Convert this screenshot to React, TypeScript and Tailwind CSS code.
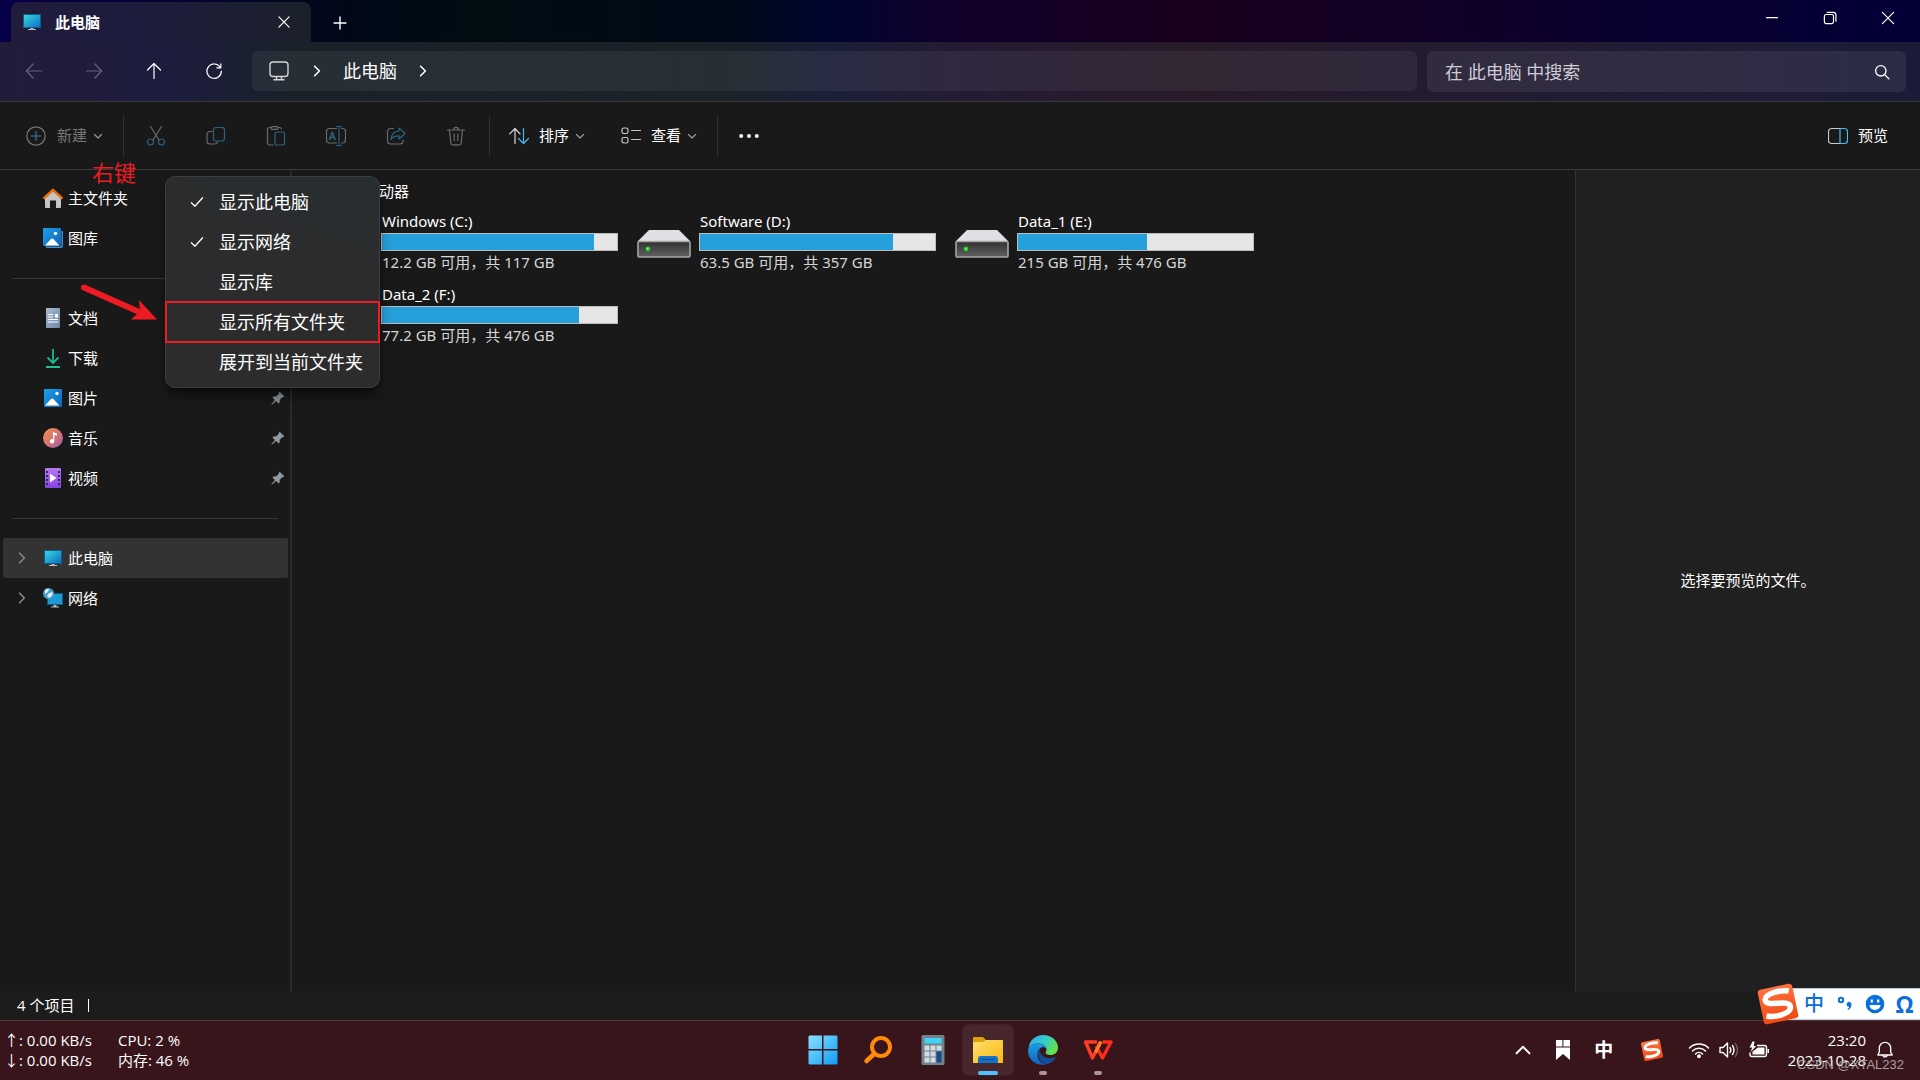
import type { ReactNode } from "react";

const NAV_BG =
  "bg-[linear-gradient(90deg,#231b3a_0%,#1c1c3d_9%,#1a2129_15%,#1b2228_38%,#1b1f38_43%,#241b33_50%,#281a29_62%,#231b30_74%,#1f1c36_90%,#1c1c38_100%)]";
const STRIP_BG =
  "bg-[linear-gradient(90deg,#060048_0%,#05003a_6%,#000818_18%,#000d12_25%,#000a18_38%,#000530_43%,#12002b_50%,#18001c_62%,#120026_74%,#080030_86%,#030036_100%)]";

type StrokeProps = { children: ReactNode; size?: number; className?: string };

function Stroke({ children, size = 20, className = "" }: StrokeProps) {
  return (
    <svg
      width={size}
      height={size}
      viewBox="0 0 20 20"
      fill="none"
      stroke="currentColor"
      strokeWidth="1.2"
      strokeLinecap="round"
      strokeLinejoin="round"
      className={`shrink-0 ${className}`}
      aria-hidden="true"
    >
      {children}
    </svg>
  );
}

function ChevronDown() {
  return (
    <Stroke size={10} className="text-[#9a9a9a]">
      <path d="M3 7l7 7 7-7" strokeWidth="2.4" />
    </Stroke>
  );
}

function ChevronRight({ className = "" }: { className?: string }) {
  return (
    <Stroke size={12} className={className}>
      <path d="M6 2l8 8-8 8" strokeWidth="2.6" />
    </Stroke>
  );
}

function MonitorIcon() {
  return (
    <svg width="20" height="20" viewBox="0 0 20 20" className="shrink-0" aria-hidden="true">
      <defs>
        <linearGradient id="screen" x1="0" y1="0" x2="1" y2="1">
          <stop offset="0" stopColor="#35d6e0" />
          <stop offset="1" stopColor="#0f6fc4" />
        </linearGradient>
      </defs>
      <rect x="1" y="2" width="18" height="14" rx="0.6" fill="#0d5f86" />
      <rect x="2" y="3" width="16" height="12" fill="url(#screen)" />
      <path d="M8.500 16h3v1h2.500v1H6v-1h2.500z" fill="#b8c0c6" />
    </svg>
  );
}

function HomeIcon() {
  return (
    <svg width="20" height="20" viewBox="0 0 20 20" className="shrink-0" aria-hidden="true">
      <path d="M2 10l8-7 8 7v9a1 1 0 0 1-1 1h-4v-7.500H7V20H3a1 1 0 0 1-1-1z" fill="#c4c4c4" />
      <path d="M1.200 10L10 1.800 18.800 10" fill="none" stroke="#e8710f" strokeWidth="2.400" strokeLinejoin="round" strokeLinecap="round" />
    </svg>
  );
}

function PictureIcon({ stacked = false }: { stacked?: boolean }) {
  return (
    <svg width="20" height="20" viewBox="0 0 20 20" className="shrink-0" aria-hidden="true">
      <defs>
        <linearGradient id="sky" x1="0" y1="0" x2="1" y2="1">
          <stop offset="0" stopColor="#1aa0ea" />
          <stop offset="1" stopColor="#0f62b8" />
        </linearGradient>
      </defs>
      {stacked && <path d="M18.500 3v14.500a1 1 0 0 1-1 1H3V20h15a2 2 0 0 0 2-2V3z" fill="#3b8ed0" />}
      <rect x={stacked ? 0 : 1} y={stacked ? 0 : 1} width="18" height="18" rx="1" fill="url(#sky)" />
      <path d="M2 17.500l6-6.500q1.200-1.200 2.400 0l6 6.500z" fill="#fff" />
      <circle cx={stacked ? 12.5 : 14} cy="5.500" r="1.700" fill="#fff" />
    </svg>
  );
}

function DocumentIcon() {
  return (
    <svg width="20" height="20" viewBox="0 0 20 20" className="shrink-0" aria-hidden="true">
      <defs>
        <linearGradient id="paper" x1="0" y1="0" x2="1" y2="1">
          <stop offset="0" stopColor="#a9bcd0" />
          <stop offset="1" stopColor="#6c86a5" />
        </linearGradient>
      </defs>
      <rect x="3" y="0" width="14" height="20" rx="1" fill="url(#paper)" />
      <path d="M5 6.500h5M5 9h5M5 11.500h10M5 14h10" stroke="#fff" strokeWidth="1.200" />
      <rect x="12" y="6" width="3" height="3.500" fill="#fff" />
    </svg>
  );
}

function DownloadIcon() {
  return (
    <svg width="20" height="20" viewBox="0 0 20 20" className="shrink-0" aria-hidden="true">
      <path d="M10 1v14M4.500 9.500L10 15l5.500-5.500" fill="none" stroke="#1fb58d" strokeWidth="1.800" />
      <path d="M3 19h14" stroke="#25cfa0" strokeWidth="1.800" />
    </svg>
  );
}

function MusicIcon() {
  return (
    <svg width="20" height="20" viewBox="0 0 20 20" className="shrink-0" aria-hidden="true">
      <defs>
        <linearGradient id="disc" x1="0" y1="0" x2="1" y2="1">
          <stop offset="0.1" stopColor="#f08a54" />
          <stop offset="0.6" stopColor="#d07078" />
          <stop offset="1" stopColor="#8a5bb8" />
        </linearGradient>
      </defs>
      <circle cx="10" cy="10" r="10" fill="url(#disc)" />
      <path d="M10 4l4 1.500v2L11.300 7v6.200a2.200 2.200 0 1 1-1.300-2z" fill="#fff" />
    </svg>
  );
}

function VideoIcon() {
  return (
    <svg width="20" height="20" viewBox="0 0 20 20" className="shrink-0" aria-hidden="true">
      <defs>
        <linearGradient id="film" x1="0" y1="0" x2="0" y2="1">
          <stop offset="0" stopColor="#b77af0" />
          <stop offset="1" stopColor="#8443e0" />
        </linearGradient>
      </defs>
      <rect x="2" y="0" width="16" height="20" rx="1" fill="url(#film)" />
      <path d="M4 3v15M16 3v15" stroke="#3d2170" strokeWidth="2" strokeDasharray="2 2" />
      <path d="M7 5.500v9l6.500-4.500z" fill="#fff" />
    </svg>
  );
}

function NetworkIcon() {
  return (
    <svg width="20" height="20" viewBox="0 0 20 20" className="shrink-0" aria-hidden="true">
      <rect x="4" y="5" width="16" height="12" rx="0.500" fill="#0d5f86" />
      <rect x="5" y="6" width="14" height="10" fill="#1d9ad6" />
      <path d="M10.500 17h3v1.500h2.500v1H8v-1h2.500z" fill="#b8c0c6" />
      <circle cx="5.500" cy="5.500" r="5.500" fill="#4a9cc4" />
      <path d="M2 2q2-2 4-1L5 4 2 6zM6 5l4-1-1 4-3 2-2-2z" fill="#d9ecf2" />
    </svg>
  );
}

function PinIcon() {
  return (
    <svg width="14" height="14" viewBox="0 0 14 14" className="shrink-0" aria-hidden="true">
      <path d="M8.700 0.700l4.600 4.600-1.100 1-1-.1-2.400 2.500-.2 2.700-1.100 1.100-2.400-2.400L1.300 13.300l-.9.300.3-.9 3.200-3.700L1.500 6.500 2.600 5.400l2.700-.2 2.500-2.400-.1-1z" fill="#8e98a0" />
    </svg>
  );
}

function DriveIcon() {
  return (
    <svg width="54" height="28" viewBox="0 0 54 28" className="shrink-0" aria-hidden="true">
      <defs>
        <linearGradient id="drive" x1="0" y1="0" x2="0" y2="1">
          <stop offset="0" stopColor="#303030" />
          <stop offset="1" stopColor="#626262" />
        </linearGradient>
      </defs>
      <path d="M12 0h30l11 11H1z" fill="#dfe0e4" />
      <rect x="1" y="11.500" width="52" height="15.500" rx="1" fill="url(#drive)" stroke="#a5a5a5" strokeWidth="1.600" />
      <circle cx="11" cy="19" r="2.400" fill="#1fd022" />
      <circle cx="10.600" cy="18.600" r="0.900" fill="#a8ff9a" />
    </svg>
  );
}

function SogouIcon({ size }: { size: number }) {
  return (
    <svg width={size} height={size} viewBox="0 0 40 40" className="shrink-0" aria-hidden="true">
      <defs>
        <linearGradient id="sogou" x1="0" y1="0" x2="0" y2="1">
          <stop offset="0" stopColor="#ff7240" />
          <stop offset="1" stopColor="#f04a10" />
        </linearGradient>
      </defs>
      <g transform="rotate(-12 20 20)">
        <rect x="4" y="4" width="32" height="32" rx="3" fill="url(#sogou)" />
        <path
          d="M32 10.500C26 8 11 8 9.500 13.500C8.500 18 15 18.500 21 19.500C28 20.500 32 22 30 26.500C27.500 31 14 31.500 7.500 28.500"
          fill="none"
          stroke="#fff"
          strokeWidth="5"
        />
      </g>
    </svg>
  );
}

function NavButton({ label, dim = false, children }: { label: string; dim?: boolean; children: ReactNode }) {
  return (
    <button type="button" aria-label={label} disabled={dim} className={`flex h-10 w-[60px] items-center justify-center ${dim ? "text-[#66607a]" : "text-white"}`}>
      <Stroke>{children}</Stroke>
    </button>
  );
}

function TitleBar() {
  return (
    <div className={`flex h-[42px] items-start ${STRIP_BG}`}>
      <div className="mt-[2px] ml-[11px] flex h-10 w-[300px] items-center rounded-t-lg bg-[linear-gradient(90deg,#211b3c,#1c1c3c_45%,#1b202a)] pr-[15px] pl-[11px]">
        <MonitorIcon />
        <span className="ml-[13px] text-[15px] font-bold">此电脑</span>
        <button type="button" aria-label="关闭标签页" className="ml-auto flex h-6 w-6 items-center justify-center">
          <Stroke size={12}>
            <path d="M1.500 1.500l17 17M18.500 1.500l-17 17" strokeWidth="2" />
          </Stroke>
        </button>
      </div>
      <button type="button" aria-label="新标签页" className="ml-4 flex h-[46px] w-[26px] items-center justify-center">
        <Stroke size={14}>
          <path d="M10 1.500v17M1.500 10h17" strokeWidth="2" />
        </Stroke>
      </button>
      <div className="ml-auto flex pr-[3px]">
        <button type="button" aria-label="最小化" className="flex h-9 w-[58px] items-center justify-center">
          <Stroke size={14}>
            <path d="M2 9.500h16" strokeWidth="1.600" />
          </Stroke>
        </button>
        <button type="button" aria-label="还原" className="flex h-9 w-[58px] items-center justify-center">
          <Stroke size={14}>
            <rect x="2" y="5" width="13" height="13" rx="2.500" strokeWidth="1.700" />
            <path d="M6 2h8.500a4 4 0 0 1 4 4v8.500" strokeWidth="1.700" />
          </Stroke>
        </button>
        <button type="button" aria-label="关闭" className="flex h-9 w-[58px] items-center justify-center">
          <Stroke size={14}>
            <path d="M2 2l16 16M18 2L2 18" strokeWidth="1.700" />
          </Stroke>
        </button>
      </div>
    </div>
  );
}

function NavBar() {
  return (
    <div className={`flex h-[60px] items-start border-b border-[#393939] pt-[9px] pr-[14px] pl-1 ${NAV_BG}`}>
      <NavButton label="后退" dim>
        <path d="M17.500 10h-15M9 3L2.500 10 9 17" />
      </NavButton>
      <NavButton label="前进" dim>
        <path d="M2.500 10h15M11 3l6.500 7-6.500 7" />
      </NavButton>
      <NavButton label="向上">
        <path d="M10 17.500v-15M3.500 9L10 2.500 16.500 9" />
      </NavButton>
      <NavButton label="刷新">
        <path d="M16.300 6.500A7.200 7.200 0 1 0 17.300 10M16.800 2.800v4h-4" />
      </NavButton>
      <nav aria-label="地址" className="ml-2 flex h-10 flex-1 items-center rounded-md bg-white/6 pl-4 text-lg">
        <svg width="22" height="20" viewBox="0 0 22 20" fill="none" stroke="#d2d4d8" strokeWidth="1.400" className="shrink-0" aria-hidden="true">
          <rect x="2" y="1" width="18" height="14.500" rx="3" />
          <path d="M8.500 15.500v3M13.500 15.500v3M5.500 18.800h11" />
        </svg>
        <ChevronRight className="ml-[21px]" />
        <a href="#this-pc" className="ml-5">
          此电脑
        </a>
        <ChevronRight className="ml-5" />
      </nav>
      <label className="ml-[10px] flex h-[41px] w-[479px] items-center rounded-md bg-white/7 pr-4 pl-[18px]">
        <input type="text" aria-label="搜索" placeholder="在 此电脑 中搜索" className="min-w-0 flex-1 bg-transparent text-lg text-[#cfccd6] outline-none placeholder:text-[#cfccd6]" />
        <Stroke size={16}>
          <circle cx="8.500" cy="8.500" r="6.500" strokeWidth="1.700" />
          <path d="M13.300 13.300l5.200 5.200" strokeWidth="1.700" />
        </Stroke>
      </label>
    </div>
  );
}

const fileActions: { label: string; icon: ReactNode }[] = [
  {
    label: "剪切",
    icon: (
      <>
        <path d="M4.500 0.500L13 14M15.500 0.500L7 14" stroke="#6a6a6a" />
        <circle cx="4.500" cy="16" r="3" stroke="#2c6280" />
        <circle cx="15.500" cy="16" r="3" stroke="#2c6280" />
      </>
    ),
  },
  {
    label: "复制",
    icon: (
      <>
        <path d="M6 5.500H4a3 3 0 0 0-3 3V15a3 3 0 0 0 3 3h4.500a3 3 0 0 0 3-2.200" stroke="#6a6a6a" />
        <rect x="7.500" y="1.500" width="11" height="13.500" rx="2.500" stroke="#2c6280" />
      </>
    ),
  },
  {
    label: "粘贴",
    icon: (
      <>
        <path d="M7 19H3.500A2 2 0 0 1 1.500 17V3.500a2 2 0 0 1 2-2H5M12 1.500h1.500a2 2 0 0 1 2 1.500" stroke="#6a6a6a" />
        <rect x="5" y="0.700" width="7" height="2.600" rx="1.300" stroke="#6a6a6a" />
        <rect x="9" y="6" width="9.500" height="13" rx="2" stroke="#2c6280" />
      </>
    ),
  },
  {
    label: "重命名",
    icon: (
      <>
        <path d="M10.500 2.500H3.500a3 3 0 0 0-3 3V14a3 3 0 0 0 3 3h7M15.500 2.500h1a3 3 0 0 1 3 3V14a3 3 0 0 1-3 3h-1" stroke="#6a6a6a" />
        <path d="M10.500 0.500h5M10.500 19.500h5M13 0.500v19" stroke="#2c6280" />
        <text x="3" y="13.500" fontSize="10" fontFamily="Liberation Sans, sans-serif" fill="#2c6280" stroke="#2c6280" strokeWidth="0.500">
          A
        </text>
      </>
    ),
  },
  {
    label: "共享",
    icon: (
      <>
        <path d="M7.500 2.500H4.500a3 3 0 0 0-3 3V15a3 3 0 0 0 3 3H14a3 3 0 0 0 3-3v-1" stroke="#6a6a6a" />
        <path d="M13 2l6 5.500-6 5.500V9.800c-4 0-6.500 1-8 3.700C5.400 8.500 8 5.400 13 5z" stroke="#2c6280" />
      </>
    ),
  },
  {
    label: "删除",
    icon: <path d="M1.500 4h17M7.500 3.800a2.500 2.500 0 0 1 5 0M3.500 4l1.300 13a2 2 0 0 0 2 1.800h6.400a2 2 0 0 0 2-1.800L16.500 4M8.200 8v6.500M11.800 8v6.500" stroke="#6a6a6a" />,
  },
];

function Divider({ className = "" }: { className?: string }) {
  return <span className={`h-10 w-px shrink-0 bg-[#333] ${className}`} />;
}

function Toolbar() {
  return (
    <div className="flex h-[68px] items-center border-b border-[#393939] bg-[#191919] pr-8 pl-[26px] text-[15px]">
      <button type="button" disabled className="flex items-center text-[#767676]">
        <Stroke>
          <circle cx="10" cy="10" r="9.200" />
          <path d="M10 5.500v9M5.500 10h9" stroke="#2c6280" strokeWidth="1.500" />
        </Stroke>
        <span className="mr-[6px] ml-[11px]">新建</span>
        <ChevronDown />
      </button>
      <Divider className="mr-[2px] ml-5" />
      {fileActions.map((a) => (
        <button key={a.label} type="button" disabled aria-label={a.label} className="flex w-[60px] justify-center">
          <Stroke>{a.icon}</Stroke>
        </button>
      ))}
      <Divider className="ml-[3px]" />
      <button type="button" className="ml-[19px] flex items-center">
        <Stroke>
          <path d="M6 17.500v-15M0.700 7.800L6 2.500l5 5.300" stroke="#d8d8d8" />
          <path d="M14.500 2.500v15M9.500 12.500l5 5 5-5" stroke="#4cb8f0" />
        </Stroke>
        <span className="mr-[6px] ml-[10px]">排序</span>
        <ChevronDown />
      </button>
      <button type="button" className="ml-9 flex items-center">
        <Stroke>
          <rect x="1" y="2" width="6" height="5.500" rx="1.800" stroke="#c8c8c8" />
          <rect x="1" y="11.500" width="6" height="5.500" rx="1.800" stroke="#c8c8c8" />
          <path d="M10.500 4.500h9M10.500 13.500h9" stroke="#c8c8c8" />
        </Stroke>
        <span className="mr-[6px] ml-[10px]">查看</span>
        <ChevronDown />
      </button>
      <Divider className="ml-5" />
      <button type="button" aria-label="查看更多" className="ml-[21px]">
        <Stroke>
          <g fill="#fff" stroke="none">
            <circle cx="2.200" cy="10" r="2" />
            <circle cx="10" cy="10" r="2" />
            <circle cx="17.800" cy="10" r="2" />
          </g>
        </Stroke>
      </button>
      <button type="button" className="ml-auto flex items-center gap-[10px]">
        <Stroke>
          <path d="M12 2.500H3.500a3 3 0 0 0-3 3v9a3 3 0 0 0 3 3H12" stroke="#c8c8c8" />
          <path d="M12 2.500h4.500a3 3 0 0 1 3 3v9a3 3 0 0 1-3 3H12z" stroke="#4cb8f0" />
        </Stroke>
        预览
      </button>
    </div>
  );
}

type SideItemProps = { icon: ReactNode; label: string; pinned?: boolean; expandable?: boolean; active?: boolean };

function SideItem({ icon, label, pinned, expandable, active }: SideItemProps) {
  return (
    <a href="#" className={`flex h-10 items-center rounded-[2px] pr-[3px] pl-[13px] ${active ? "bg-[#333]" : ""}`}>
      <span className="flex w-[27px] items-center">{expandable && <ChevronRight className="text-[#8a8a8a]" />}</span>
      {icon}
      <span className="ml-[5px] flex-1">{label}</span>
      {pinned && <PinIcon />}
    </a>
  );
}

function SideDivider() {
  return (
    <div className="flex h-10 items-center px-[10px]">
      <hr className="w-full border-[#393939]" />
    </div>
  );
}

const menuItems = [
  { label: "显示此电脑", checked: true },
  { label: "显示网络", checked: true },
  { label: "显示库", checked: false },
  { label: "显示所有文件夹", checked: false, marked: true },
  { label: "展开到当前文件夹", checked: false },
];

function ContextMenu() {
  return (
    <div role="menu" className="absolute top-[6px] left-[165px] z-10 w-[215px] rounded-[10px] border border-[#3d3d3d] bg-[linear-gradient(200deg,#262d31,#2c2c2c_40%)] py-[5px] shadow-lg shadow-black/50">
      {menuItems.map((m) => (
        <button
          key={m.label}
          type="button"
          role="menuitem"
          className={`flex h-10 w-full items-center pl-6 text-lg whitespace-nowrap ${m.marked ? "outline-2 -outline-offset-1 outline-[#ed1c24]" : ""}`}
        >
          <span className="w-[29px]">
            {m.checked && (
              <Stroke size={14}>
                <path d="M2 11l5 5L18 4" strokeWidth="1.800" />
              </Stroke>
            )}
          </span>
          {m.label}
        </button>
      ))}
    </div>
  );
}

function Sidebar() {
  return (
    <aside className="w-[292px] shrink-0 border-r-2 border-[#2b2b2b] pt-2 pr-[2px] pl-[3px] text-[15px]">
      <SideItem icon={<HomeIcon />} label="主文件夹" />
      <SideItem icon={<PictureIcon stacked />} label="图库" />
      <SideDivider />
      <SideItem icon={<DocumentIcon />} label="文档" pinned />
      <SideItem icon={<DownloadIcon />} label="下载" pinned />
      <SideItem icon={<PictureIcon />} label="图片" pinned />
      <SideItem icon={<MusicIcon />} label="音乐" pinned />
      <SideItem icon={<VideoIcon />} label="视频" pinned />
      <SideDivider />
      <SideItem icon={<MonitorIcon />} label="此电脑" expandable active />
      <SideItem icon={<NetworkIcon />} label="网络" expandable />
    </aside>
  );
}

const drives = [
  { name: "Windows (C:)", info: "12.2 GB 可用，共 117 GB", used: 90 },
  { name: "Software (D:)", info: "63.5 GB 可用，共 357 GB", used: 82 },
  { name: "Data_1 (E:)", info: "215 GB 可用，共 476 GB", used: 55 },
  { name: "Data_2 (F:)", info: "77.2 GB 可用，共 476 GB", used: 84 },
];

function Drives() {
  return (
    <main className="min-w-0 flex-1 pt-[11px] pr-8 pl-[27px] font-['Noto_Sans','Noto_Sans_CJK_SC',sans-serif] text-[15px] leading-5">
      <h2>设备和驱动器</h2>
      <div className="mt-[10px] grid grid-cols-[repeat(auto-fill,299px)] gap-x-[19px] gap-y-3">
        {drives.map((d) => (
          <div key={d.name} className="flex items-center gap-2">
            <div className="pt-1">
              <DriveIcon />
            </div>
            <div className="flex-1 whitespace-nowrap">
              <div className="pl-px">{d.name}</div>
              <div className="mt-[2px] mb-px h-[18px] border border-[#bcbcbc] bg-[#e6e6e6]">
                <div className="h-full bg-[#26a0da]" style={{ width: `${d.used}%` }} />
              </div>
              <div className="pl-px text-[#d6d6d6]">{d.info}</div>
            </div>
          </div>
        ))}
      </div>
    </main>
  );
}

// Red marks drawn over the window: the note and the arrow to the menu entry
function Annotations() {
  return (
    <>
      <span className="absolute -top-3 left-[92px] z-20 text-[22px] leading-7 text-[#ed1c24]">右键</span>
      <svg width="78" height="40" viewBox="0 0 78 40" className="absolute top-[113px] left-[80px] z-20" aria-hidden="true">
        <path d="M4 4.500L57 28" stroke="#ed1c24" strokeWidth="6" strokeLinecap="round" />
        <path d="M59 17l18 19.500-26 0 9-8z" fill="#ed1c24" />
      </svg>
    </>
  );
}

function ImeBar() {
  return (
    <div className="absolute right-0 bottom-0 z-20 flex h-8 w-[142px] items-center border-y border-[#b9cbe0] bg-white text-[#0a6fd8]">
      <span className="-ml-[22px] shrink-0">
        <SogouIcon size={44} />
      </span>
      <span className="w-7 text-center text-[20px] leading-6 font-medium">中</span>
      <svg width="26" height="20" viewBox="0 0 26 20" className="ml-[5px] shrink-0" aria-hidden="true">
        <circle cx="8" cy="6" r="2.200" fill="none" stroke="currentColor" strokeWidth="2" />
        <path d="M14.500 8.500a2.400 2.400 0 0 1 4 2c0 2.600-1.200 4.400-3.500 5.500l-.6-1c1.200-.7 1.600-1.400 1.700-2.300a2.300 2.300 0 0 1-1.600-4.200z" fill="currentColor" />
      </svg>
      <svg width="20" height="20" viewBox="0 0 20 20" className="ml-[6px] shrink-0" aria-hidden="true">
        <circle cx="10" cy="10" r="9.300" fill="currentColor" />
        <path d="M6.800 5.500v3M13.200 5.500v3" stroke="#fff" strokeWidth="2.200" />
        <path d="M4.500 11h11a5.500 5 0 0 1-11 0z" fill="#fff" />
      </svg>
      <span className="flex-1 pl-1 text-center text-[23px] leading-6 font-bold">Ω</span>
    </div>
  );
}

function TaskCell({ label, active, running, children }: { label: string; active?: boolean; running?: boolean; children: ReactNode }) {
  return (
    <button type="button" aria-label={label} className={`relative flex h-[50px] w-[50px] items-center justify-center rounded-md ${active ? "bg-white/8 ring-1 ring-white/5" : ""}`}>
      {children}
      {active && <span className="absolute bottom-0 h-1 w-5 rounded-full bg-[#4cc2ff]" />}
      {running && <span className="absolute bottom-0 h-1 w-2 rounded-full bg-[#a8969a]" />}
    </button>
  );
}

function TaskApps() {
  return (
    <div className="flex items-center gap-[5px]">
      <TaskCell label="开始">
        <svg width="30" height="30" viewBox="0 0 30 30" aria-hidden="true">
          <defs>
            <linearGradient id="win" gradientUnits="userSpaceOnUse" x1="0" y1="0" x2="30" y2="30">
              <stop offset="0" stopColor="#8be3ff" />
              <stop offset="1" stopColor="#0c9af5" />
            </linearGradient>
          </defs>
          <path d="M1.500 0.500H14v13.500H0.500V1.500zM15.500 0.500H28.500l1 1V14h-14zM0.500 15.500H14V29.500H1.500l-1-1zM15.500 15.500h14v13l-1 1h-13z" fill="url(#win)" />
        </svg>
      </TaskCell>
      <TaskCell label="搜索">
        <svg width="30" height="30" viewBox="0 0 30 30" fill="none" stroke="#ff8a0a" aria-hidden="true">
          <circle cx="18" cy="12" r="9" strokeWidth="4" />
          <path d="M11.500 18.500L3.500 26" strokeWidth="4.500" strokeLinecap="round" />
        </svg>
      </TaskCell>
      <TaskCell label="计算器">
        <svg width="24" height="30" viewBox="0 0 24 30" aria-hidden="true">
          <rect x="0.500" width="23" height="30" rx="1.500" fill="#74808c" />
          <rect x="3.500" y="3" width="17" height="5.500" fill="#3fd4f4" />
          <path d="M3.500 10.500h5v5h-5zM9.500 10.500h5v5h-5zM15.500 10.500h5v5h-5zM3.500 16.500h5v5h-5zM9.500 16.500h5v5h-5zM3.500 22.500h5v5h-5zM9.500 22.500h5v5h-5z" fill="#d3dbe2" />
          <path d="M15.500 16.500h5v11h-5z" fill="#164a86" />
        </svg>
      </TaskCell>
      <TaskCell label="文件资源管理器" active>
        <svg width="30" height="28" viewBox="0 0 30 28" aria-hidden="true">
          <defs>
            <linearGradient id="folder" x1="0" y1="0" x2="1" y2="1">
              <stop offset="0" stopColor="#ffdf72" />
              <stop offset="1" stopColor="#fbb80a" />
            </linearGradient>
          </defs>
          <path d="M0 2a1 1 0 0 1 1-1h9l3 3v4H0z" fill="#dca008" />
          <path d="M0 6h10l3-2h16a1 1 0 0 1 1 1v22H0z" fill="url(#folder)" />
          <path d="M5 27v-4a3 3 0 0 1 3-3h14a3 3 0 0 1 3 3v4z" fill="#1273c8" />
          <path d="M8.500 23.500h13" stroke="#0b4f91" strokeWidth="1.200" />
        </svg>
      </TaskCell>
      <TaskCell label="Edge" running>
        <svg width="30" height="30" viewBox="0 0 30 30" aria-hidden="true">
          <defs>
            <linearGradient id="edgeTop" x1="0" y1="0" x2="1" y2="0.500">
              <stop offset="0.200" stopColor="#2fb4ea" />
              <stop offset="0.600" stopColor="#36cfc2" />
              <stop offset="1" stopColor="#66e049" />
            </linearGradient>
            <linearGradient id="edgeSide" x1="0" y1="0" x2="0" y2="1">
              <stop offset="0" stopColor="#1b9de2" />
              <stop offset="1" stopColor="#0f62c0" />
            </linearGradient>
          </defs>
          <path d="M0.500 13C1.500 5 8 0 15 0c8.500 0 15 6 15 12.500 0 5-3.500 7.500-7.500 7.500-3 0-5-1-5-2.200 0-.8 1-1.300 1-3.300 0-3-3-6-8-6C5.500 8.500 2 10.500 0.500 13z" fill="url(#edgeTop)" />
          <path d="M0 15.500C0.500 11 4.500 8.500 10 8.500c4.500 0 8 2 8.500 5.500-1-1.600-2.500-2-4-2-3 1-5 4-5 7.500 0 5 3.500 9.500 9 9.800C11 31.500 0 27 0 15.500z" fill="url(#edgeSide)" />
          <path d="M11.500 14.500C8 20.500 13 29.500 19 29.200c3.500-.9 6.500-3.200 8.500-6.200.3-.6-.1-.9-.7-.7-6 2.500-14 .7-15.300-7.800z" fill="#124d98" />
        </svg>
      </TaskCell>
      <TaskCell label="WPS" running>
        <svg width="30" height="20" viewBox="0 0 30 20" fill="none" aria-hidden="true">
          <path d="M14 2H2.500L9.500 18L17.500 2" stroke="#ff3b22" strokeWidth="3.400" strokeLinejoin="round" />
          <path d="M13 6l6.500 12L28 2H19.500" stroke="#ff2a18" strokeWidth="3.400" strokeLinejoin="round" />
          <path d="M12.500 12.500L18 1.500" stroke="#ff7a2e" strokeWidth="3.400" />
        </svg>
      </TaskCell>
    </div>
  );
}

function Tray() {
  return (
    <div className="flex items-center justify-self-end pr-[26px]">
      <button type="button" aria-label="显示隐藏的图标" className="flex w-[39px] justify-center">
        <Stroke size={16}>
          <path d="M2 14l8-8 8 8" strokeWidth="2.400" />
        </Stroke>
      </button>
      <span className="flex w-10 justify-center">
        <svg width="14" height="20" viewBox="0 0 14 20" fill="#fff" aria-hidden="true">
          <path d="M0 0h6.400v6.400H0zM7.400 0H14v6.400H7.400zM0 7.400h14V20l-7-6-7 6z" />
        </svg>
      </span>
      <span className="w-[42px] text-center text-[19px] leading-6 font-bold">中</span>
      <span className="flex w-[54px] justify-center">
        <SogouIcon size={24} />
      </span>
      <button type="button" aria-label="网络、音量和电池" className="ml-[9px] flex items-center gap-[9px]">
        <svg width="22" height="18" viewBox="0 0 22 18" fill="none" stroke="#fff" strokeWidth="1.500" strokeLinecap="round" aria-hidden="true">
          <path d="M1.500 7a13.400 13.400 0 0 1 19 0M4.500 10a9.200 9.200 0 0 1 13 0M7.500 13a5 5 0 0 1 7 0" />
          <circle cx="11" cy="15.200" r="1.200" fill="#fff" />
        </svg>
        <svg width="20" height="18" viewBox="0 0 20 18" fill="none" stroke="#fff" strokeWidth="1.400" strokeLinecap="round" strokeLinejoin="round" aria-hidden="true">
          <path d="M1 6.500h3L8.500 2v14L4 11.500H1z" />
          <path d="M11 6.500q1.800 2.500 0 5M13.500 4.500q3 4.500 0 9" />
          <path d="M16.500 2.500q4 6.500 0 13" stroke="#7b5f66" />
        </svg>
        <svg width="22" height="18" viewBox="0 0 22 18" fill="none" stroke="#fff" strokeWidth="1.400" strokeLinejoin="round" aria-hidden="true">
          <path d="M9 4.500h7.500a2 2 0 0 1 2 2v7a2 2 0 0 1-2 2H4a2 2 0 0 1-2-2v-2" />
          <path d="M10 6.500h6.500v7H4.500v-3z" fill="#fff" stroke="none" />
          <path d="M19.500 8v4h1.500V8z" fill="#fff" stroke="none" />
          <path d="M4.500 0.500L1.500 6.500h2.800L2.500 11l5.800-6H5.600l1-4.500z" fill="#fff" stroke="none" />
        </svg>
      </button>
      <button type="button" className="ml-[18px] text-right text-[15px] leading-5">
        <span className="block">23:20</span>
        <span className="block">2023-10-28</span>
      </button>
      <button type="button" aria-label="通知" className="ml-[10px]">
        <Stroke size={18}>
          <path d="M10 1.500a6.300 6.300 0 0 0-6.300 6.300v4.400L2 15.500h16l-1.700-3.300V7.800A6.300 6.300 0 0 0 10 1.500zM7.500 15.800a2.600 2.600 0 0 0 5 0" strokeWidth="1.500" />
        </Stroke>
      </button>
    </div>
  );
}

export default function App() {
  return (
    <div className="flex min-h-screen flex-col bg-[#191919] font-['Open_Sans','Noto_Sans_CJK_SC',sans-serif] text-white">
      <header>
        <TitleBar />
        <NavBar />
        <Toolbar />
      </header>
      <div className="relative flex flex-1">
        <Sidebar />
        <Drives />
        <section aria-label="预览" className="flex w-[345px] shrink-0 items-center justify-center border-l border-[#333] bg-[#202020] text-[15px]">
          选择要预览的文件。
        </section>
        <ContextMenu />
        <Annotations />
      </div>
      <footer className="relative flex h-[29px] items-center gap-[14px] bg-[#1c1c1c] pl-[17px] text-[15px]">
        <span>4 个项目</span>
        <span className="h-[13px] w-px bg-white" />
        <ImeBar />
      </footer>
      <div className="relative grid h-[60px] grid-cols-[1fr_auto_1fr] items-center border-t border-[#54373d] bg-[#38151b] pb-[2px]">
        <div className="flex gap-[26px] pl-1 text-[15px] leading-5">
          <div>
            <div>↑: 0.00 KB/s</div>
            <div>↓: 0.00 KB/s</div>
          </div>
          <div>
            <div>CPU: 2 %</div>
            <div>内存: 46 %</div>
          </div>
        </div>
        <TaskApps />
        <Tray />
        <span className="absolute right-4 bottom-[7px] font-['Liberation_Sans',sans-serif] text-[13px] leading-4 text-[#a9a0a2]">CSDN @XTAL232</span>
      </div>
    </div>
  );
}
